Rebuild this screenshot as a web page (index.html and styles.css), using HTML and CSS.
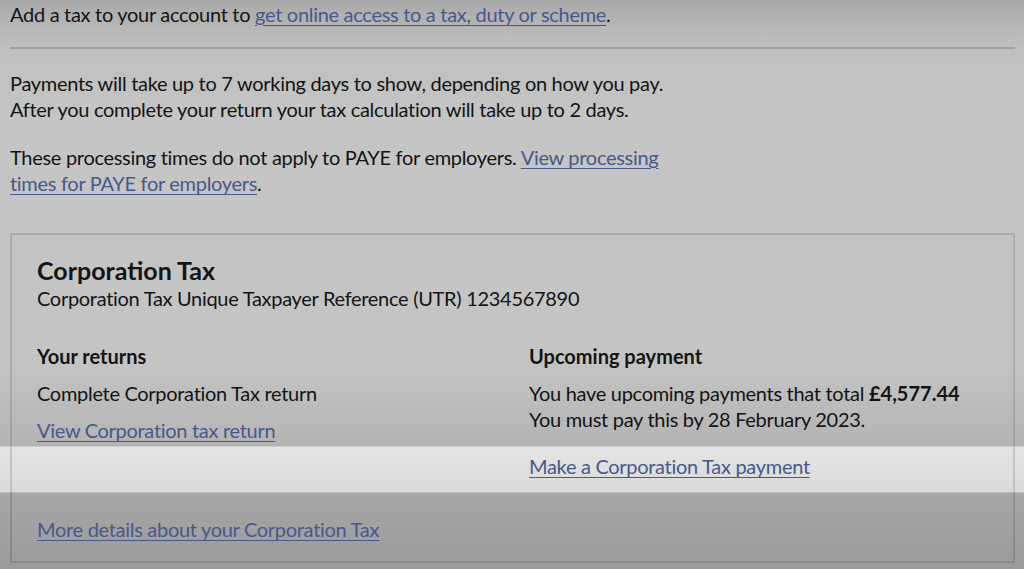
FILE: index.html
```html
<!DOCTYPE html>
<html lang="en">
<head>
    <meta charset="UTF-8">
    <meta name="viewport" content="width=device-width, initial-scale=1.0">
    <title>Your tax account</title>
    <link rel="stylesheet" href="styles.css">
</head>
<body>
    <main class="page">
        <p class="lead">Add a tax to your account to <a href="#">get online access to a tax, duty or scheme</a>.</p>

        <hr class="rule">

        <p>Payments will take up to 7 working days to show, depending on how you pay.<br>
        After you complete your return your tax calculation will take up to 2 days.</p>

        <p class="note">These processing times do not apply to PAYE for employers. <a href="#">View processing<br>times for PAYE for employers</a>.</p>

        <!-- Corporation Tax card -->
        <section class="card">
            <h2>Corporation Tax</h2>
            <p class="utr">Corporation Tax Unique Taxpayer Reference (UTR) 1234567890</p>

            <div class="columns">
                <div class="col">
                    <h3>Your returns</h3>
                    <p class="gap-s">Complete Corporation Tax return</p>
                    <p><a href="#">View Corporation tax return</a></p>
                </div>
                <div class="col">
                    <h3>Upcoming payment</h3>
                    <p class="gap-l">You have upcoming payments that total <strong>&pound;4,577.44</strong><br>
                    You must pay this by 28 February 2023.</p>
                    <p><a href="#">Make a Corporation Tax payment</a></p>
                </div>
            </div>

            <p class="more"><a href="#">More details about your Corporation Tax</a></p>
        </section>
    </main>
</body>
</html>
```

FILE: styles.css
```css
/* dimmed video frame with a lit band over the payment link */
html {
    min-height: 100%;
    background: linear-gradient(to bottom,
        #a9a9a9 0px,
        #bfbfbf 45px,
        #c5c5c5 120px,
        #c4c4c4 360px,
        #b4b4b4 446px,
        #e4e4e4 447px,
        #dadada 492px,
        #a6a6a6 493px,
        #9b9b9b 569px);
}

body {
    margin: 0;
    font-family: Lato, "Liberation Sans", sans-serif;
    font-size: 20px;
    line-height: 26px;
    letter-spacing: -0.3px;
    color: #141414;
}

.page {
    padding: 1px 9px 6px 10px;
}

p {
    margin: 0;
}

a {
    color: #47598a;
    text-decoration: underline;
    text-underline-offset: 3px;
    text-decoration-thickness: 1px;
}

strong {
    letter-spacing: 0;
}

.rule {
    border: 0;
    border-top: 2px solid rgba(0, 0, 0, 0.16);
    margin: 20px 0 21px;
}

.note {
    margin-top: 22px;
}

.card {
    margin-top: 37px;
    border: 2px solid rgba(0, 0, 0, 0.12);
    padding: 20px 25px 19px 25px;
}

.card h2 {
    margin: 0;
    font-size: 25px;
    line-height: 30px;
    font-weight: 700;
    letter-spacing: 0;
}

.utr {
    margin-bottom: 32px;
}

.columns {
    display: grid;
    grid-template-columns: 1fr 1fr;
    column-gap: 33px;
}

.col h3 {
    margin: 0 0 11px;
    font-size: 20px;
    line-height: 26px;
    font-weight: 700;
    letter-spacing: 0;
}

.gap-s {
    margin-bottom: 11px;
}

.gap-l {
    margin-bottom: 21px;
}

.more {
    margin-top: 37px;
}
```
